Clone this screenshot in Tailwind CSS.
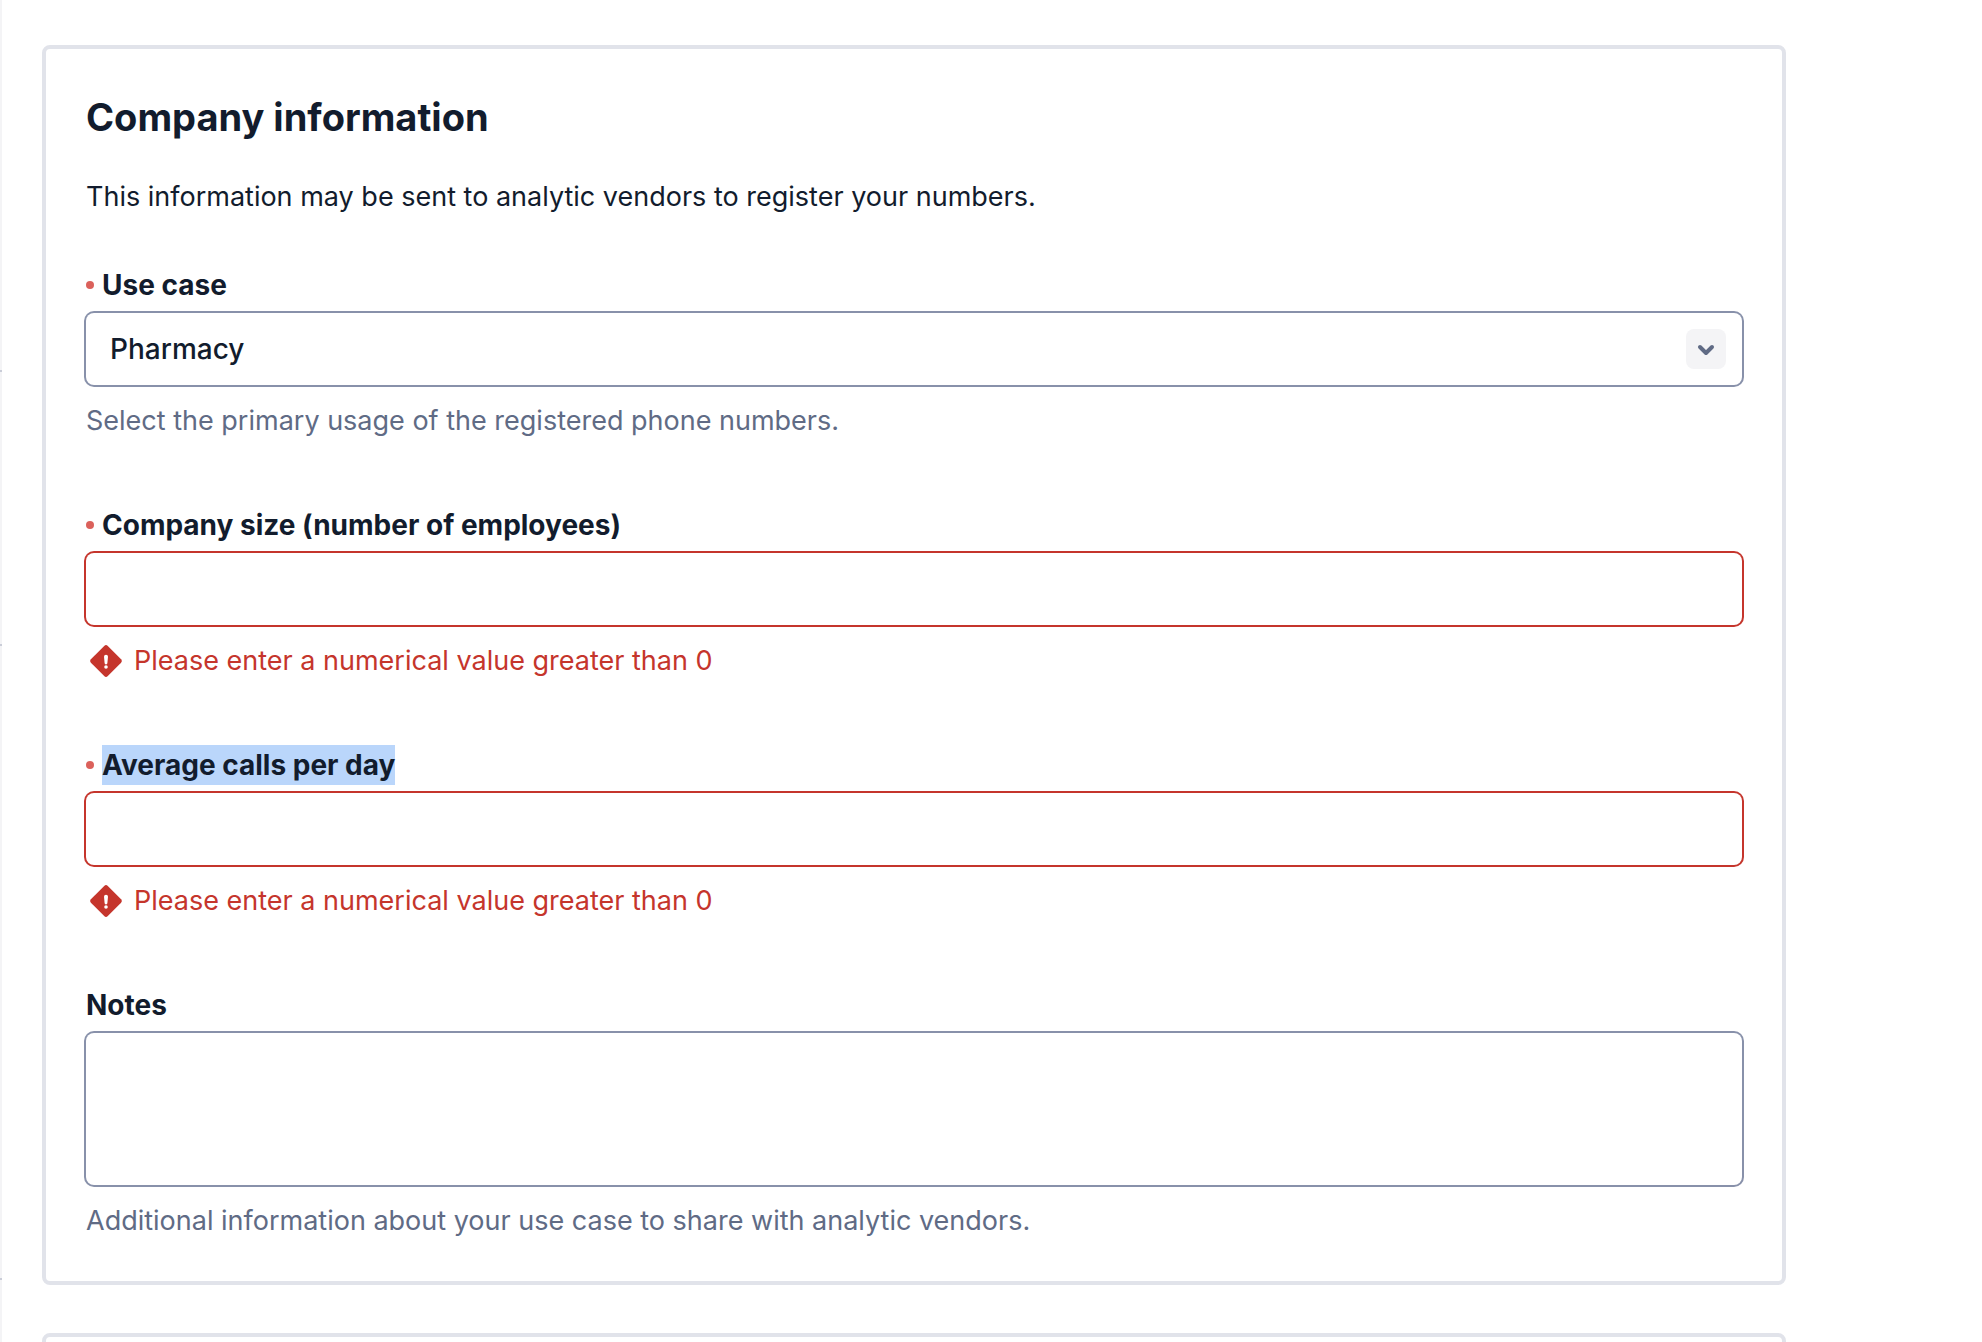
<!DOCTYPE html>
<html lang="en">
<head>
<meta charset="utf-8">
<meta name="viewport" content="width=device-width, initial-scale=1">
<title>Company information</title>
<script src="https://cdn.jsdelivr.net/npm/@tailwindcss/browser@4"></script>
</head>
<body class="flex min-h-screen bg-white font-['Inter',sans-serif] text-[27px] leading-10 text-[#121c2d]">
  <!-- Edge of the side navigation -->
  <aside class="flex h-screen w-0.5 shrink-0 flex-col gap-0.5 bg-[#cacdd8]">
    <div class="h-[370px] bg-[#f4f4f6]"></div>
    <div class="h-[272px] bg-[#f4f4f6]"></div>
    <div class="h-[632px] bg-[#f4f4f6]"></div>
    <div class="grow bg-[#f4f4f6]"></div>
  </aside>

  <main class="flex h-screen grow flex-col gap-12 overflow-hidden pt-[45px] pr-[196px] pl-10">
    <form class="shrink-0 rounded-lg border-4 border-[#e1e3ea] p-10">
      <h2 class="mb-8 text-[38px] leading-14 font-bold">Company information</h2>
      <p class="mb-12">This information may be sent to analytic vendors to register your numbers.</p>

      <div class="flex flex-col gap-16">
        <div>
          <div class="mb-2 flex items-center gap-2">
            <span class="size-2 rounded-full bg-[#db615b]"></span>
            <label for="use-case" class="text-[28px] leading-10 font-bold">Use case</label>
          </div>
          <div class="relative">
            <select id="use-case" class="block h-[72px] w-full appearance-none rounded-lg bg-white px-6 text-[28px] leading-10 font-medium ring-2 ring-[#8891aa]">
              <option>Pharmacy</option>
            </select>
            <span class="pointer-events-none absolute top-4 right-4 flex size-10 items-center justify-center rounded-lg bg-[#f4f4f6]">
              <svg class="size-10" viewBox="0 0 40 40" fill="none" stroke="#606b85" stroke-width="4" stroke-linecap="round" stroke-linejoin="round" aria-hidden="true"><path d="M14 18l6 6 6-6"/></svg>
            </span>
          </div>
          <p class="mt-4 text-[#606b85]">Select the primary usage of the registered phone numbers.</p>
        </div>

        <div>
          <div class="mb-2 flex items-center gap-2">
            <span class="size-2 rounded-full bg-[#db615b]"></span>
            <label for="company-size" class="text-[28px] leading-10 font-bold">Company size (number of employees)</label>
          </div>
          <input id="company-size" type="text" inputmode="numeric" aria-describedby="company-size-error" class="block h-[72px] w-full rounded-lg bg-white px-6 ring-2 ring-[#c5352c]">
          <p id="company-size-error" class="mt-4 flex items-center gap-2 text-[#c5352c]">
            <svg class="size-10 shrink-0" viewBox="0 0 40 40" aria-hidden="true"><path fill="#c5352c" d="M18.2 4.9a2.6 2.6 0 0 1 3.6 0l13.3 13.3a2.6 2.6 0 0 1 0 3.6L21.8 35.1a2.6 2.6 0 0 1-3.6 0L4.9 21.8a2.6 2.6 0 0 1 0-3.6z"/><path fill="#fff" d="M18 15.8a2 2 0 0 1 4 0l-.6 6.2a1.4 1.4 0 0 1-2.8 0z"/><circle cx="20" cy="26" r="1.8" fill="#fff"/></svg>
            Please enter a numerical value greater than 0
          </p>
        </div>

        <div>
          <div class="mb-2 flex items-center gap-2">
            <span class="size-2 rounded-full bg-[#db615b]"></span>
            <label for="average-calls" class="bg-[#bad6fb] text-[28px] leading-10 font-bold">Average calls per day</label>
          </div>
          <input id="average-calls" type="text" inputmode="numeric" aria-describedby="average-calls-error" class="block h-[72px] w-full rounded-lg bg-white px-6 ring-2 ring-[#c5352c]">
          <p id="average-calls-error" class="mt-4 flex items-center gap-2 text-[#c5352c]">
            <svg class="size-10 shrink-0" viewBox="0 0 40 40" aria-hidden="true"><path fill="#c5352c" d="M18.2 4.9a2.6 2.6 0 0 1 3.6 0l13.3 13.3a2.6 2.6 0 0 1 0 3.6L21.8 35.1a2.6 2.6 0 0 1-3.6 0L4.9 21.8a2.6 2.6 0 0 1 0-3.6z"/><path fill="#fff" d="M18 15.8a2 2 0 0 1 4 0l-.6 6.2a1.4 1.4 0 0 1-2.8 0z"/><circle cx="20" cy="26" r="1.8" fill="#fff"/></svg>
            Please enter a numerical value greater than 0
          </p>
        </div>

        <div>
          <label for="notes" class="mb-2 block text-[28px] leading-10 font-bold">Notes</label>
          <textarea id="notes" class="block h-[152px] w-full resize-none rounded-lg bg-white px-6 py-4 ring-2 ring-[#8891aa]"></textarea>
          <p class="mt-4 text-[#606b85]">Additional information about your use case to share with analytic vendors.</p>
        </div>
      </div>
    </form>

    <section class="h-40 shrink-0 rounded-lg border-4 border-[#e1e3ea]"></section>
  </main>
</body>
</html>
